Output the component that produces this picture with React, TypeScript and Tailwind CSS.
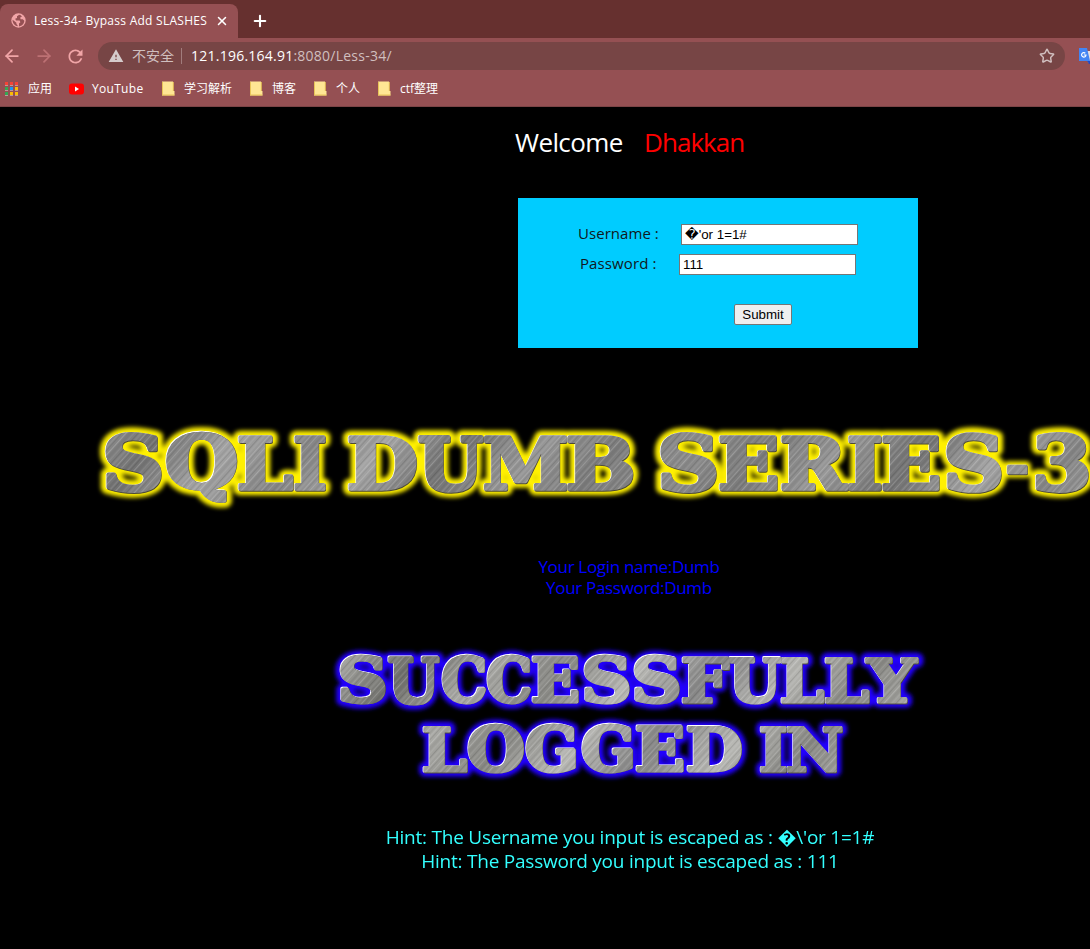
import React from "react";
import { X, Plus, ArrowLeft, ArrowRight, Star } from "lucide-react";
import { MdRefresh, MdWarning } from "react-icons/md";

type Glyph = [char: string, left: number, right: number, top: number, bottom: number];

const SERIES: Glyph[] = [
  ["S", 105, 162, 433, 493], ["Q", 166, 237, 432, 503], ["L", 238, 294, 436, 491], ["I", 294, 326, 436, 491],
  ["D", 348, 417, 436, 491], ["U", 418, 484, 436, 493], ["M", 484, 567, 436, 491], ["B", 567, 633, 436, 491],
  ["S", 660, 717, 433, 493], ["E", 719, 778, 436, 491], ["R", 781, 849, 436, 491], ["I", 848, 882, 436, 491],
  ["E", 882, 940, 436, 491], ["S", 946, 1002, 433, 493], ["-", 1007, 1028, 465, 475], ["3", 1035, 1089, 433, 493],
];

const SUCCESS: Glyph[] = [
  ["S", 340, 386, 655, 704], ["U", 388, 440, 657, 705], ["C", 442, 486, 655, 704], ["C", 487, 531, 655, 704],
  ["E", 532, 579, 657, 703], ["S", 584, 630, 655, 704], ["S", 634, 680, 655, 704], ["F", 682, 730, 657, 704],
  ["U", 729, 782, 657, 704], ["L", 781, 825, 657, 704], ["L", 825, 870, 657, 704], ["Y", 865, 919, 657, 704],
  ["L", 423, 468, 726, 773], ["O", 468, 524, 724, 773], ["G", 526, 576, 724, 773], ["G", 582, 633, 724, 773],
  ["E", 636, 684, 726, 772], ["D", 687, 742, 726, 772], ["I", 760, 787, 726, 773], ["N", 787, 843, 726, 773],
];

const ctx = document.createElement("canvas").getContext("2d")!;

// Extra weight given to every letter, in units of the 100px face.
const WEIGHT = 5;

// Stretches a letter so that its thickened ink fills the given box.
function fit([ch, l, r, t, b]: Glyph) {
  ctx.font = "bold 100px 'DejaVu Serif'";
  const m = ctx.measureText(ch);
  const w = WEIGHT / 2;
  const sx = (r - l) / (m.actualBoundingBoxLeft + m.actualBoundingBoxRight + WEIGHT);
  const sy = (b - t) / (m.actualBoundingBoxAscent + m.actualBoundingBoxDescent + WEIGHT);
  const x = l + (m.actualBoundingBoxLeft + w) * sx;
  const y = t + (m.actualBoundingBoxAscent + w) * sy;
  return `matrix(${sx} 0 0 ${sy} ${x} ${y})`;
}

function Letters({ glyphs, ...rest }: { glyphs: Glyph[] } & React.SVGProps<SVGGElement>) {
  return (
    <g fontFamily="'DejaVu Serif', serif" fontWeight="bold" fontSize="100" strokeLinejoin="round" {...rest}>
      {glyphs.map((g, i) => (
        <text key={i} transform={fit(g)}>{g[0]}</text>
      ))}
    </g>
  );
}

const STREAKS: [x: number, width: number, color: string, opacity: number][] = [
  [0, 1, "#fff", 0.16], [3, 2, "#000", 0.06], [6, 1, "#fff", 0.1], [8, 1, "#000", 0.1], [11, 1, "#fff", 0.2],
  [13, 3, "#000", 0.05], [17, 1, "#fff", 0.08], [20, 1, "#000", 0.12], [22, 2, "#fff", 0.07], [26, 1, "#fff", 0.18],
  [28, 1, "#000", 0.08],
];

function Banner({ id, glyphs, glow, spread, y, height, tint, box }: {
  id: string; glyphs: Glyph[]; glow: string; spread: number; y: number; height: number; tint: string[]; box: string;
}) {
  return (
    <svg className={box} viewBox={`0 ${y} 1090 ${height}`}>
      <defs>
        <linearGradient id={id + "g"} gradientUnits="userSpaceOnUse" x1="0" y1={y} x2="230" y2={y + 190} spreadMethod="reflect">
          {tint.map((c, i) => <stop key={i} offset={i / (tint.length - 1)} stopColor={c} />)}
        </linearGradient>
        <pattern id={id + "p"} width="31" height="40" patternUnits="userSpaceOnUse" patternTransform="rotate(42)">
          {STREAKS.map(([x, w, c, o]) => <rect key={x} x={x} width={w} height="40" fill={c} opacity={o} />)}
        </pattern>
        <filter id={id + "b"} filterUnits="userSpaceOnUse" x="0" y={y} width="1110" height={height}>
          <feGaussianBlur stdDeviation="2" />
        </filter>
        <mask id={id + "m"} maskUnits="userSpaceOnUse" x="0" y={y} width="1090" height={height}>
          <Letters glyphs={glyphs} fill="#fff" stroke="#fff" strokeWidth={WEIGHT} />
        </mask>
      </defs>
      <g filter={`url(#${id}b)`}>
        <Letters glyphs={glyphs} fill={glow} stroke={glow} strokeWidth={spread} aria-hidden />
      </g>
      <Letters glyphs={glyphs} fill="#fff" stroke="#fff" strokeWidth={WEIGHT} transform="translate(-0.7 -0.7)" aria-hidden />
      <Letters glyphs={glyphs} fill="#554d20" stroke="#4d4a38" strokeWidth={WEIGHT} transform="translate(0.5 0.5)" aria-hidden />
      <g mask={`url(#${id}m)`}>
        <rect x="0" y={y} width="1090" height={height} fill={`url(#${id}g)`} />
        <rect x="0" y={y} width="1090" height={height} fill={`url(#${id}p)`} />
      </g>
    </svg>
  );
}

function Globe() {
  return (
    <svg className="mb-px size-[15px] shrink-0" viewBox="0 0 15 15">
      <circle cx="7.5" cy="7.5" r="7.2" fill="#f1a5a7" />
      <path d="M8.2 1.8L6 3.2V5L4.2 5.8L5 7.4H8.6L9.4 9.2L8 10.6V13.4C11 13 13.2 10.8 13.3 7.8L11.8 6.2H9.6L9.2 4.6L11 3.6C10.3 2.6 9.2 2 8.2 1.8Z" fill="#955053" />
      <path d="M1.6 6.8L5.4 9.8V11L6.6 12.2V13.3C3.6 12.8 1.4 10 1.6 6.8Z" fill="#955053" />
    </svg>
  );
}

function Folder() {
  return (
    <svg className="h-[15px] w-[13px] shrink-0" viewBox="0 0 13 15">
      <path d="M0 0.5H11V10H12.5V14.5H0Z" fill="#ffe694" />
      <path d="M0.5 1V14M0 14H12.5M11.3 1V10" stroke="#e8c558" fill="none" />
    </svg>
  );
}

function AppsIcon() {
  const colors = ["#f44336", "#f44336", "#f44336", "#34a853", "#2196f3", "#fbbc04", "#34a853", "#fbbc04", "#fbbc04"];
  return (
    <svg className="h-[14px] w-[13px] shrink-0" viewBox="0 0 13 14">
      {colors.map((c, i) => (
        <rect key={i} x={(i % 3) * 5} y={Math.floor(i / 3) * 5} width="3" height="3" fill={c} />
      ))}
      <path d="M0 3.5H3M5 3.5H8M10 3.5H13M0 8.5H3M5 8.5H8M10 8.5H13M0 13.5H3M5 13.5H8M10 13.5H13" stroke="#b99" />
    </svg>
  );
}

export default function App() {
  return (
    <div className="h-[949px] w-[1090px] overflow-hidden bg-black font-['Open_Sans','Noto_Sans_CJK_SC',sans-serif]">
      <header className="h-[107px] border-b border-[#7b4446] bg-[#955053] text-white">
        <div className="flex h-[38px] items-end bg-[#66302f]">
          <div className="flex h-[34px] w-[238px] items-center rounded-t-lg bg-[#955053] pl-[11px]">
            <Globe />
            <span className="ml-[8px] w-[176px] text-[12px] tracking-[0.27px] whitespace-nowrap">Less-34- Bypass Add SLASHES</span>
            <X className="ml-[5px] size-[14px] shrink-0" strokeWidth={2.6} />
          </div>
          <Plus className="mb-[8px] ml-[13px] size-[18px]" strokeWidth={2.8} />
        </div>
        <div className="flex h-[36px] items-center">
          <ArrowLeft className="ml-[2px] size-[20px] shrink-0 text-[#f1a5a7]" strokeWidth={2.1} />
          <ArrowRight className="ml-[12px] size-[20px] shrink-0 text-[#bd7174]" strokeWidth={2.1} />
          <MdRefresh className="ml-[11px] size-[21px] shrink-0 text-[#f1a5a7]" />
          <div className="ml-[12px] flex h-[28px] w-[967px] shrink-0 items-center rounded-full bg-[#774545] pl-[10px]">
            <MdWarning className="size-[16px] shrink-0 text-[#d5cccc]" />
            <span className="ml-[8px] w-[43px] pb-[2px] text-[14px] whitespace-nowrap text-[#d0bfbf]">不安全</span>
            <span className="ml-[6px] h-[16px] w-px bg-[#a17c7c]" />
            <span className="ml-[9px] grow pb-[2px] text-[14px] tracking-[0.24px] text-[#d0bfbf]">
              <span className="text-white">121.196.164.91</span>:8080/Less-34/
            </span>
            <Star className="mr-[10px] size-[16px] text-[#d0bfbf]" strokeWidth={2.2} />
          </div>
          <svg className="ml-[14px] h-[16px] w-[11px] shrink-0" viewBox="0 0 11 16">
            <path d="M8 3H11V15H9Z" fill="#e5dce0" />
            <path d="M0 0H8L11 13H0Z" fill="#4285f4" />
            <path d="M8 13H11V16H10Z" fill="#2949bd" />
            <path d="M6.3 5.2A2.2 2.2 0 1 0 7 7H4.8" stroke="#fff" strokeWidth="1.2" fill="none" />
          </svg>
        </div>
        <div className="flex h-[29px] items-center text-[12px] whitespace-nowrap">
          <span className="ml-[5px] flex"><AppsIcon /></span>
          <span className="ml-[10px] w-[24px]">应用</span>
          <svg className="ml-[17px] h-[12px] w-[15px] shrink-0" viewBox="0 0 15 12">
            <rect y="0.5" width="15" height="11" rx="3" fill="#f00" />
            <path d="M6 3.5V8.5L10 6Z" fill="#fff" />
          </svg>
          <span className="ml-[8px] w-[52px] tracking-[0.3px]">YouTube</span>
          <span className="ml-[18px] flex"><Folder /></span>
          <span className="ml-[9px] w-[48px]">学习解析</span>
          <span className="ml-[18px] flex"><Folder /></span>
          <span className="ml-[9px] w-[24px]">博客</span>
          <span className="ml-[18px] flex"><Folder /></span>
          <span className="ml-[9px] w-[24px]">个人</span>
          <span className="ml-[18px] flex"><Folder /></span>
          <span className="ml-[9px]">ctf整理</span>
        </div>
      </header>

      <main>
        <h1 className="flex h-[91px] pt-[17px] pl-[515px] text-[26px] leading-[36px] whitespace-nowrap">
          <span className="w-[129px] tracking-[-0.6px] text-white">Welcome</span>
          <span className="tracking-[-0.95px] text-[#f00]">Dhakkan</span>
        </h1>
        <form className="ml-[518px] h-[150px] w-[400px] bg-[#00ccff] pt-[26px] text-[15px] text-[#101820]">
          <div className="flex h-[30px] items-start pl-[60px]">
            <label className="w-[103px] leading-[18px] tracking-[0.05px] whitespace-pre">Username :</label>
            <input className="h-[21px] w-[177px] border border-[#767676] bg-white px-[3px] font-['Liberation_Sans','DejaVu_Sans',sans-serif] text-[13.33px] text-black" defaultValue={"\uFFFD'or 1=1#"} />
          </div>
          <div className="flex h-[50px] items-start pl-[62px]">
            <label className="w-[99px] leading-[18px] tracking-[0.1px] whitespace-pre">Password :</label>
            <input className="h-[21px] w-[177px] border border-[#767676] bg-white px-[3px] font-['Liberation_Sans',sans-serif] text-[13.33px] text-black" defaultValue="111" />
          </div>
          <button type="button" className="ml-[216px] block h-[21px] w-[58px] rounded-[2px] border border-[#767676] bg-[#efefef] font-['Liberation_Sans',sans-serif] text-[13.33px] leading-[19px] text-black">Submit</button>
        </form>

        <Banner id="a" glyphs={SERIES} glow="#fff000" spread={18} y={348} height={208} box="block h-[208px] w-[1090px]"
          tint={["#8c8c8c", "#7c7c7c", "#989898", "#727272", "#a4a4a4", "#858585"]} />

        <div className="h-[44px] w-[1258px] text-center text-[17px] leading-[21px] tracking-[-0.32px] text-[#0000ff]">
          <p>Your Login name:Dumb</p>
          <p>Your Password:Dumb</p>
        </div>

        <Banner id="b" glyphs={SUCCESS} glow="#2200ff" spread={19} y={600} height={225} box="block h-[225px] w-[1090px]"
          tint={["#868686", "#b8b8b4", "#888884", "#aaaaa6", "#70706c", "#a8a8a4"]} />

        <div className="w-[1260px] text-center text-[19px] leading-[24px] tracking-[-0.23px] text-[#33ffff]">
          <p>Hint: The Username you input is escaped as : {"\uFFFD"}\'or 1=1#</p>
          <p>Hint: The Password you input is escaped as : 111</p>
        </div>
      </main>
    </div>
  );
}
